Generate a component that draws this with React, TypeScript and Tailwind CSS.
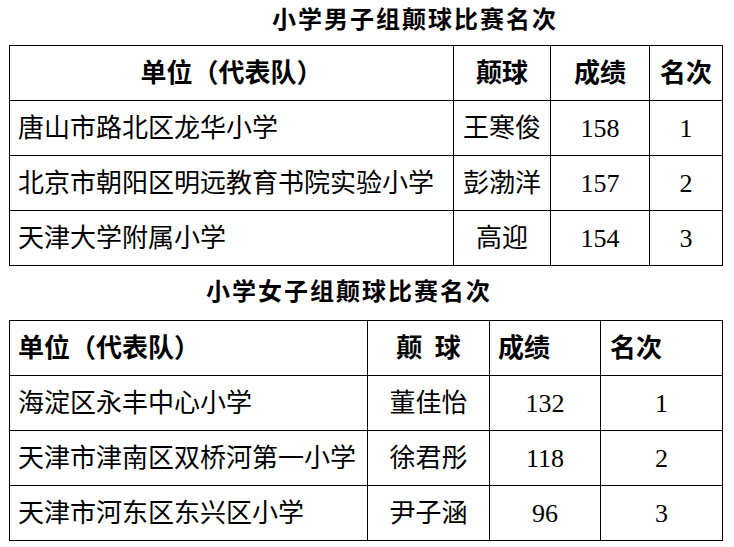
import React from "react";

type Row = [string, string, string, string];

const boys: Row[] = [
  ["唐山市路北区龙华小学", "王寒俊", "158", "1"],
  ["北京市朝阳区明远教育书院实验小学", "彭渤洋", "157", "2"],
  ["天津大学附属小学", "高迎", "154", "3"],
];

const girls: Row[] = [
  ["海淀区永丰中心小学", "董佳怡", "132", "1"],
  ["天津市津南区双桥河第一小学", "徐君彤", "118", "2"],
  ["天津市河东区东兴区小学", "尹子涵", "96", "3"],
];

const cell = "h-[55px] border-r border-b border-black flex items-center";

export default function App() {
  return (
    <div
      className="w-[734px] h-[547px] bg-white text-black overflow-hidden"
      style={{ fontFamily: '"Liberation Serif", "Noto Sans CJK SC", serif' }}
    >
      <div className="h-[45px] leading-[40px] pl-[272px] text-[24px] font-bold tracking-[2px]">
        小学男子组颠球比赛名次
      </div>
      <div className="ml-[9px] w-[714px] border-l border-t border-black grid grid-cols-[444px_97px_99px_73px] text-[26px]">
        <div className={`${cell} justify-center font-bold`}>单位（代表队）</div>
        <div className={`${cell} justify-center font-bold`}>颠球</div>
        <div className={`${cell} justify-center font-bold`}>成绩</div>
        <div className={`${cell} justify-center font-bold`}>名次</div>
        {boys.map((r) => (
          <React.Fragment key={r[0]}>
            <div className={`${cell} pl-[8px] whitespace-nowrap`}>{r[0]}</div>
            <div className={`${cell} justify-center`}>{r[1]}</div>
            <div className={`${cell} justify-center`}>{r[2]}</div>
            <div className={`${cell} justify-center`}>{r[3]}</div>
          </React.Fragment>
        ))}
      </div>
      <div className="h-[54px] leading-[52px] pl-[206px] text-[24px] font-bold tracking-[2px]">
        小学女子组颠球比赛名次
      </div>
      <div className="ml-[9px] w-[714px] border-l border-t border-black grid grid-cols-[358px_122px_111px_122px] text-[26px]">
        <div className={`${cell} pl-[8px] font-bold`}>单位（代表队）</div>
        <div className={`${cell} justify-center font-bold [word-spacing:6px]`}>颠 球</div>
        <div className={`${cell} pl-[8px] font-bold`}>成绩</div>
        <div className={`${cell} pl-[9px] font-bold`}>名次</div>
        {girls.map((r) => (
          <React.Fragment key={r[0]}>
            <div className={`${cell} pl-[8px] whitespace-nowrap`}>{r[0]}</div>
            <div className={`${cell} justify-center`}>{r[1]}</div>
            <div className={`${cell} justify-center`}>{r[2]}</div>
            <div className={`${cell} justify-center`}>{r[3]}</div>
          </React.Fragment>
        ))}
      </div>
    </div>
  );
}
